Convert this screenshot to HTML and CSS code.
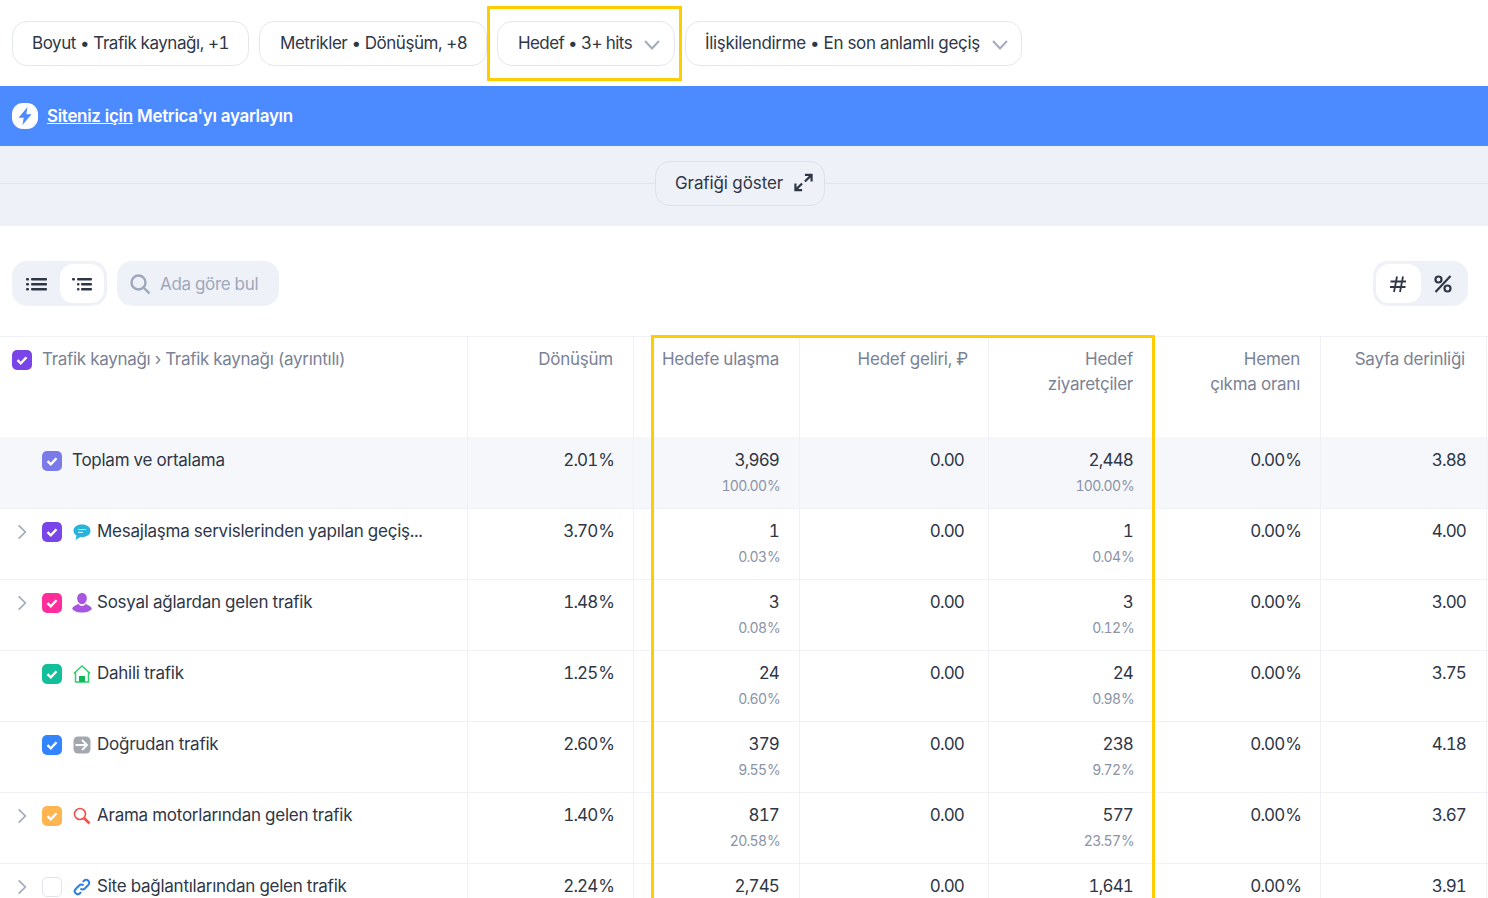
FILE: index.html
```html
<!DOCTYPE html>
<html lang="tr">
<head>
<meta charset="utf-8">
<title>Rapor</title>
<link rel="stylesheet" href="styles.css">
</head>
<body>
<svg width="0" height="0" class="defs">
  <defs>
    <symbol id="chev-d" viewBox="0 0 16 16"><path d="M1 4 8 11.500 15 4" fill="none" stroke="currentColor" stroke-width="2"/></symbol>
    <symbol id="chev-r" viewBox="0 0 12 18"><path d="M2 1 10 9 2 17" fill="none" stroke="currentColor" stroke-width="2"/></symbol>
    <symbol id="tick" viewBox="0 0 20 20"><path d="M5.500 10.200 8.800 13.300 14.500 7.200" fill="none" stroke="#fff" stroke-width="2.400"/></symbol>
  </defs>
</svg>
<header class="filters">
  <button class="pill pill-dim">Boyut • Trafik kaynağı, +1</button>
  <button class="pill pill-met">Metrikler • Dönüşüm, +8</button>
  <button class="pill pill-goal">Hedef • 3+ hits<svg class="chev"><use href="#chev-d"/></svg></button>
  <button class="pill pill-attr">İlişkilendirme • En son anlamlı geçiş<svg class="chev"><use href="#chev-d"/></svg></button>
</header>
<div class="banner">
  <svg class="bolt" width="26" height="26" viewBox="0 0 26 26"><rect width="26" height="26" rx="11" fill="#fff"/><path d="M15.500 4 6.500 14.800h5.200L10.500 22 19.500 11.200h-5.200z" fill="#4b8aff"/></svg>
  <span><a class="banner-link">Siteniz için</a> Metrica'yı ayarlayın</span>
</div>
<div class="chart-band">
  <button class="show-chart">Grafiği göster
    <svg width="19" height="19" viewBox="0 0 20 20" fill="none" stroke="#2f3747" stroke-width="2.300"><path d="M11.500 2h7v7M18 2.500l-6.500 6.500M8.500 18h-7v-7M2 17.500l6.500-6.500"/></svg>
  </button>
</div>
<div class="controls">
  <div class="seg">
    <span class="seg-item"><svg width="22" height="16" viewBox="0 0 22 16" fill="#2f3747"><rect x="0" y="2" width="3" height="2.500" rx="1"/><rect x="5" y="2" width="16" height="2.500" rx="1"/><rect x="0" y="7" width="3" height="2.500" rx="1"/><rect x="5" y="7" width="16" height="2.500" rx="1"/><rect x="0" y="12" width="3" height="2.500" rx="1"/><rect x="5" y="12" width="16" height="2.500" rx="1"/></svg></span>
    <span class="seg-item seg-on"><svg width="22" height="16" viewBox="0 0 22 16" fill="#2f3747"><rect x="1" y="2" width="3" height="2.500" rx="1"/><rect x="6" y="2" width="15" height="2.500" rx="1"/><rect x="6" y="7" width="2.500" height="2.500" rx="1"/><rect x="10" y="7" width="11" height="2.500" rx="1"/><rect x="6" y="12" width="2.500" height="2.500" rx="1"/><rect x="10" y="12" width="11" height="2.500" rx="1"/></svg></span>
  </div>
  <label class="search">
    <svg width="22" height="22" viewBox="0 0 22 22" fill="none" stroke="#9ea8bb" stroke-width="2.400"><circle cx="9.500" cy="9.500" r="7"/><path d="m14.500 14.500 6 6"/></svg>
    <span>Ada göre bul</span>
  </label>
  <div class="seg seg-right">
    <span class="seg-item seg-on"><svg width="18" height="18" viewBox="0 0 18 18" fill="none" stroke="#2f3747" stroke-width="1.800"><path d="M1.500 6.500h15.500M1 12h15.500M8 1.500 5 17M14 1.500 11 17"/></svg></span>
    <span class="seg-item"><svg width="20" height="20" viewBox="0 0 20 20" fill="none" stroke="#2f3747" stroke-width="2.200"><circle cx="5.500" cy="5.500" r="3"/><circle cx="14.500" cy="14.500" r="3"/><path d="M17.500 2 2.500 18"/></svg></span>
  </div>
</div>
<main class="table">
  <div class="row head">
    <div class="cell first"><svg class="box purple"><use href="#tick"/></svg><span class="head-text">Trafik kaynağı › Trafik kaynağı (ayrıntılı)</span></div>
    <div class="cell">Dönüşüm</div>
    <div class="cell">Hedefe ulaşma</div>
    <div class="cell">Hedef geliri, ₽</div>
    <div class="cell">Hedef<br>ziyaretçiler</div>
    <div class="cell">Hemen<br>çıkma oranı</div>
    <div class="cell">Sayfa derinliği</div>
  </div>
  <div class="row total">
    <div class="cell first total-first"><svg class="box violet"><use href="#tick"/></svg><span>Toplam ve ortalama</span></div>
    <div class="cell">2.01&#8202;%</div>
    <div class="cell">3,969<small>100.00&#8202;%</small></div>
    <div class="cell rev">0.00</div>
    <div class="cell">2,448<small>100.00&#8202;%</small></div>
    <div class="cell">0.00&#8202;%</div>
    <div class="cell">3.88</div>
  </div>
  <div class="row">
    <div class="cell first"><svg class="arrow"><use href="#chev-r"/></svg><svg class="box purple"><use href="#tick"/></svg>
      <svg class="src" viewBox="0 0 18 18"><path d="M9 1.500C4 1.500.5 4 .5 7.800c0 2.200 1.200 3.800 3 4.700L2.500 17 7.300 14c.6.100 1.100.1 1.700.1 5 0 8.500-2.500 8.500-6.300S14 1.500 9 1.500z" fill="#26b3dc"/><path d="M5 6.500h8M5 9.300h5" stroke="#bfeaf6" stroke-width="1.200"/></svg>
      <span>Mesajlaşma servislerinden yapılan geçiş...</span></div>
    <div class="cell">3.70&#8202;%</div>
    <div class="cell">1<small>0.03&#8202;%</small></div>
    <div class="cell rev">0.00</div>
    <div class="cell">1<small>0.04&#8202;%</small></div>
    <div class="cell">0.00&#8202;%</div>
    <div class="cell">4.00</div>
  </div>
  <div class="row">
    <div class="cell first"><svg class="arrow"><use href="#chev-r"/></svg><svg class="box pink"><use href="#tick"/></svg>
      <svg class="src src-wide" viewBox="0 0 20 20" fill="#a855e0"><path d="M10 0c2.800 0 4.800 2.200 4.800 5.200 0 3.200-2 6-4.800 6s-4.800-2.800-4.800-6C5.200 2.200 7.200 0 10 0z"/><path d="M6.500 11C3.800 12 .8 13.500.2 15.500c1 2.500 5 4 9.800 4s8.800-1.500 9.800-4c-.6-2-3.600-3.500-6.300-4.500-.9 1.300-2 2-3.500 2s-2.600-.7-3.500-2z"/></svg>
      <span>Sosyal ağlardan gelen trafik</span></div>
    <div class="cell">1.48&#8202;%</div>
    <div class="cell">3<small>0.08&#8202;%</small></div>
    <div class="cell rev">0.00</div>
    <div class="cell">3<small>0.12&#8202;%</small></div>
    <div class="cell">0.00&#8202;%</div>
    <div class="cell">3.00</div>
  </div>
  <div class="row">
    <div class="cell first"><svg class="box teal no-arrow"><use href="#tick"/></svg>
      <svg class="src" viewBox="0 0 18 18"><path d="M.8 8.500 9 1l8.200 7.500M2.500 7v10h13V7" fill="none" stroke="#2fcf6f" stroke-width="1.500"/><rect x="6" y="11" width="6" height="6" fill="#10b859"/></svg>
      <span>Dahili trafik</span></div>
    <div class="cell">1.25&#8202;%</div>
    <div class="cell">24<small>0.60&#8202;%</small></div>
    <div class="cell rev">0.00</div>
    <div class="cell">24<small>0.98&#8202;%</small></div>
    <div class="cell">0.00&#8202;%</div>
    <div class="cell">3.75</div>
  </div>
  <div class="row">
    <div class="cell first"><svg class="box blue no-arrow"><use href="#tick"/></svg>
      <svg class="src" viewBox="0 0 18 18"><rect x=".5" y=".5" width="17" height="17" rx="4.500" fill="#a3a8b0"/><path d="M2.500 9h11M9 4l5 5-5 5" fill="none" stroke="#fff" stroke-width="1.800"/></svg>
      <span>Doğrudan trafik</span></div>
    <div class="cell">2.60&#8202;%</div>
    <div class="cell">379<small>9.55&#8202;%</small></div>
    <div class="cell rev">0.00</div>
    <div class="cell">238<small>9.72&#8202;%</small></div>
    <div class="cell">0.00&#8202;%</div>
    <div class="cell">4.18</div>
  </div>
  <div class="row">
    <div class="cell first"><svg class="arrow"><use href="#chev-r"/></svg><svg class="box orange"><use href="#tick"/></svg>
      <svg class="src" viewBox="0 0 18 18" fill="none" stroke="#f2504b"><circle cx="7" cy="7" r="5.500" stroke-width="1.600"/><path d="m11 11 5.500 5.500" stroke-width="2.600"/></svg>
      <span>Arama motorlarından gelen trafik</span></div>
    <div class="cell">1.40&#8202;%</div>
    <div class="cell">817<small>20.58&#8202;%</small></div>
    <div class="cell rev">0.00</div>
    <div class="cell">577<small>23.57&#8202;%</small></div>
    <div class="cell">0.00&#8202;%</div>
    <div class="cell">3.67</div>
  </div>
  <div class="row">
    <div class="cell first"><svg class="arrow"><use href="#chev-r"/></svg><svg class="box empty"></svg>
      <svg class="src" viewBox="0 0 18 18" fill="none" stroke="#2f7fe8" stroke-width="2"><path d="M7.500 10.500a3 3 0 0 0 4.300 0l3.500-3.500a3 3 0 0 0-4.300-4.300l-1.200 1.200"/><path d="M10.500 7.500a3 3 0 0 0-4.300 0l-3.500 3.500a3 3 0 0 0 4.300 4.300l1.200-1.200"/></svg>
      <span>Site bağlantılarından gelen trafik</span></div>
    <div class="cell">2.24&#8202;%</div>
    <div class="cell">2,745</div>
    <div class="cell rev">0.00</div>
    <div class="cell">1,641</div>
    <div class="cell">0.00&#8202;%</div>
    <div class="cell">3.91</div>
  </div>
</main>
<div class="mark mark-goal"></div>
<div class="mark mark-cols"></div>
</body>
</html>
```

FILE: styles.css
```css
* { box-sizing: border-box; }
html, body { margin: 0; height: 898px; overflow: hidden; }
body { position: relative; background: #fff; color: #2f3747; font: 17px/24px Inter, "Noto Sans", sans-serif; letter-spacing: -0.32px; font-variant-numeric: tabular-nums; }
.defs { position: absolute; }
button { font: inherit; letter-spacing: inherit; color: inherit; background: #fff; font-variant-numeric: inherit; }

.filters { height: 86px; padding: 21px 12px 0; display: flex; gap: 10px; align-items: flex-start; }
.pill { height: 45px; border: 1px solid #e4e7f0; border-radius: 15px; padding: 0 0 2px 19px; display: flex; align-items: center; gap: 12px; white-space: nowrap; flex: none; }
.pill-dim { width: 237px; letter-spacing: -0.44px; }
.pill-met { width: 228px; padding-left: 20px; letter-spacing: -0.45px; }
.pill-goal { width: 178px; padding-left: 20px; letter-spacing: -0.6px; }
.pill-attr { width: 337px; }
.chev { width: 16px; height: 16px; color: #a3abbd; margin-top: 4px; flex: none; }

.banner { height: 60px; background: #4b8aff; color: #fff; padding-left: 12px; display: flex; align-items: center; gap: 9px; font-weight: 600; letter-spacing: -0.32px; }
.bolt { flex: none; }
.banner-link { text-decoration: underline; }

.chart-band { height: 80px; background: #eef1f7; display: flex; justify-content: center; align-items: flex-start; position: relative; padding: 15px 8px 0 0; }
.chart-band::before { content: ""; position: absolute; left: 0; right: 0; top: 37px; border-top: 1px solid #e1e5ee; }
.show-chart { position: relative; height: 45px; width: 170px; border: 1px solid #dde1ea; border-radius: 15px; background: #eef1f7; display: flex; align-items: center; gap: 11px; padding: 0 0 2px 19px; letter-spacing: -0.1px; white-space: nowrap; }

.controls { height: 111px; padding: 35px 20px 0 12px; display: flex; align-items: flex-start; gap: 10px; border-bottom: 1px solid #f0f1f7; }
.seg { width: 95px; height: 45px; background: #eef1f7; border-radius: 15px; padding: 3px; display: flex; }
.seg-right { margin-left: auto; }
.seg-item { flex: 1; display: flex; align-items: center; justify-content: center; border-radius: 13px; }
.seg-on { background: #fff; }
.search { width: 162px; height: 45px; background: #eef1f7; border-radius: 15px; padding-left: 12px; display: flex; align-items: center; gap: 9px; color: #9ea8bb; }

.row { display: grid; grid-template-columns: 468px 166px 166px 189px 165px 167px 166px; height: 71px; border-bottom: 1px solid #eff1f6; }
.cell { padding: 10px 20px 0 0; text-align: right; border-right: 1px solid #eff1f6; white-space: nowrap; font-size: 17px; letter-spacing: -0.85px; }
.cell:nth-child(2), .cell:nth-child(6) { padding-right: 19px; }
.cell small { display: block; margin: 2px -1px 0 0; font-size: 14px; color: #8b93a6; letter-spacing: -0.7px; }
.rev { padding-right: 24px; }
.first { text-align: left; padding: 10px 0 0 17px; display: flex; align-items: flex-start; letter-spacing: -0.25px; }
.arrow { width: 10px; height: 16px; margin: 5px 15px 0 0; color: #a3abbd; flex: none; }
.box { width: 20px; height: 20px; border-radius: 5px; margin: 3px 11px 0 0; flex: none; }
.no-arrow { margin-left: 25px; }
.src { width: 18px; height: 18px; margin: 4px 6px 0 0; flex: none; }
.src-wide { width: 20px; height: 20px; margin: 3px 5px 0 -1px; }
.purple { background: #7a45e8; }
.violet { background: #7a7ae8; margin-left: 25px; margin-right: 10px; }
.pink { background: #ff2d9b; }
.teal { background: #13bf9b; }
.blue { background: #3284ff; }
.orange { background: #ffb54f; }
.empty { border: 1px solid #e0e3ee; background: #fff; }

.head { height: 100px; border-bottom: 0; color: #7a8296; }
.head .cell { padding-right: 20px; line-height: 25px; letter-spacing: -0.25px; }
.head .cell:last-child { padding-right: 21px; }
.head .first { padding-left: 12px; letter-spacing: -0.3px; }
.head .box { margin: 3px 10px 0 0; }
.head-text { display: block; }
.total { height: 72px; background: #f6f7fb; }
.total .cell { padding-top: 11px; }
.total-first { padding-left: 17px; }

.mark { position: absolute; border: 3px solid #ffcc00; pointer-events: none; }
.mark-goal { left: 487px; top: 6px; width: 195px; height: 75px; }
.mark-cols { left: 651px; top: 335px; width: 504px; height: 580px; }
```
